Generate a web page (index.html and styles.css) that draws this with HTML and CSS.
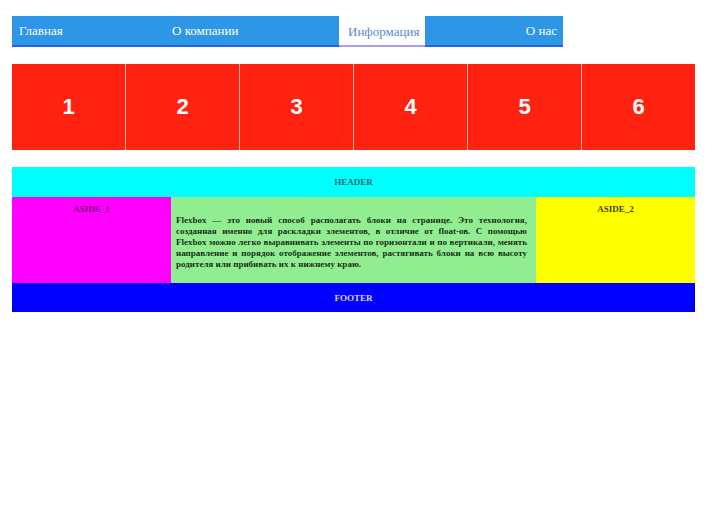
FILE: index.html
```html
<!DOCTYPE html>
<html lang="ru">
<head>
<meta charset="utf-8">
<title>Flexbox</title>
<link rel="stylesheet" href="styles.css">
</head>
<body>
<nav class="menu">
  <a class="menu-item item-1" href="#">Главная</a>
  <a class="menu-item item-2" href="#">О компании</a>
  <a class="menu-item item-3 active" href="#">Информация</a>
  <a class="menu-item item-4" href="#">О нас</a>
</nav>

<div class="boxes">
  <div class="box">1</div>
  <div class="box">2</div>
  <div class="box">3</div>
  <div class="box">4</div>
  <div class="box">5</div>
  <div class="box">6</div>
</div>

<div class="layout">
  <header class="l-header"><span>HEADER</span></header>
  <div class="l-body">
    <aside class="aside aside-1"><span>ASIDE_1</span></aside>
    <main class="l-main">
      <p>Flexbox — это новый способ располагать блоки на странице. Это технология, созданная именно для раскладки элементов, в отличие от float-ов. С помощью Flexbox можно легко выравнивать элементы по горизонтали и по вертикали, менять направление и порядок отображение элементов, растягивать блоки на всю высоту родителя или прибивать их к нижнему краю.</p>
    </main>
    <aside class="aside aside-2"><span>ASIDE_2</span></aside>
  </div>
  <footer class="l-footer"><span>FOOTER</span></footer>
</div>
</body>
</html>
```

FILE: styles.css
```css
* { box-sizing: border-box; }

body {
  margin: 0;
  padding: 16px 12px 0 12px;
  font-family: "Liberation Serif", "Times New Roman", serif;
  background: #ffffff;
}

.menu {
  display: flex;
  width: 551px;
  height: 31px;
  background: #2d96e6;
  border-bottom: 2px solid #2166e6;
}

.menu-item {
  display: flex;
  align-items: center;
  color: #ffffff;
  text-decoration: none;
  font-size: 13px;
  height: 29px;
}

.item-1 { width: 153px; padding-left: 7px; }
.item-2 { width: 174px; padding-left: 7px; }
.item-3 { width: 86px; padding-left: 9px; }
.item-4 { width: 138px; justify-content: flex-end; padding-right: 6px; }

.menu-item.active {
  background: #ffffff;
  color: #6088cc;
  height: 31px;
  margin-bottom: -2px;
  border-bottom: 2px solid #a79cf0;
  padding-top: 2px;
}

.boxes {
  display: flex;
  width: 683px;
  margin-top: 17px;
  height: 86px;
}

.box {
  flex: 1;
  display: flex;
  align-items: center;
  justify-content: center;
  background: #ff2211;
  border-left: 1px solid #f7b8ae;
  color: #ffffff;
  font-family: "Liberation Sans", Arial, sans-serif;
  font-weight: bold;
  font-size: 22px;
}

.box:first-child { border-left: none; }

.layout {
  width: 683px;
  margin-top: 17px;
  font-size: 9px;
  font-weight: bold;
}

.l-header,
.l-footer {
  height: 30px;
  display: flex;
  align-items: center;
  justify-content: center;
}

.l-header {
  background: #00ffff;
  color: rgba(0, 0, 0, 0.65);
}

.l-footer {
  height: 29px;
  background: #0000ff;
  color: rgba(255, 255, 255, 0.85);
}

.l-body {
  display: flex;
  height: 86px;
}

.aside {
  width: 159px;
  text-align: center;
  padding-top: 7px;
}

.aside-1 {
  background: #ff00ff;
  color: rgba(0, 0, 0, 0.55);
}

.aside-2 {
  background: #ffff00;
  color: rgba(0, 0, 0, 0.8);
}

.l-main {
  flex: 1;
  background: #90ee90;
  display: flex;
  align-items: center;
  padding: 4px 9px 0 5px;
  color: rgba(0, 0, 0, 0.85);
}

.l-main p {
  margin: 0;
  font-size: 9px;
  line-height: 11px;
  text-align: justify;
}
```
